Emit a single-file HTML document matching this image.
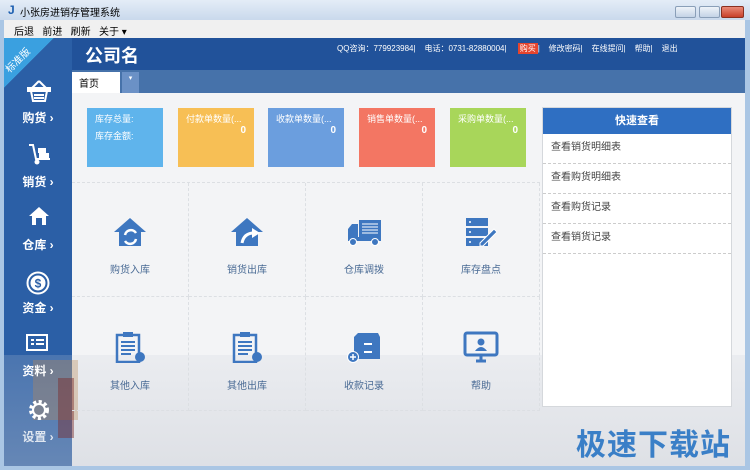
<!DOCTYPE html>
<html><head><meta charset="utf-8"><style>
*{margin:0;padding:0;box-sizing:border-box}
body{width:750px;height:470px;overflow:hidden;font-family:"Liberation Sans","Noto Sans CJK SC",sans-serif;background:#aac6e4;position:relative}
.abs{position:absolute}
.title{left:0;top:0;width:750px;height:20px;background:linear-gradient(#e4edf7,#c9d9ec);font-size:10px;color:#000}
.tool{left:4px;top:20px;width:741px;height:18px;background:#f0f0f0;font-size:10px;color:#000}
.hdr{left:4px;top:38px;width:741px;height:32px;background:#21529a}
.side{left:4px;top:38px;width:68px;height:428px;background:#2b5fa6}
.tabbar{left:72px;top:70px;width:673px;height:23px;background:#4672aa}
.content{left:72px;top:93px;width:673px;height:373px;background:#f3f4f6}
.card{top:108px;width:76px;height:59px;color:#fff;font-size:9px;padding:4px 8px}
.card .n{text-align:right;font-weight:bold;font-size:10px}
.cell{width:117px;height:114px;text-align:center;font-size:10px;color:#4a6b95;border-right:1px dashed #dcdfe3;border-bottom:1px dashed #dcdfe3}
.cell svg{display:block;margin:34px auto 14px}
.sl{left:6px;width:64px;color:#fff;font-size:12px;text-align:center;font-weight:bold}
.qi{height:30px;line-height:28px;padding-left:8px;font-size:10px;color:#444;border-bottom:1px dashed #ccc}
.btn{top:6px;width:21px;height:12px;border:1px solid #8a9fb8;border-radius:2px;background:linear-gradient(#eef3f9,#c4d3e6)}
</style></head><body>
<div class="abs title"><span class="abs" style="left:8px;top:3px;color:#1d5fb0;font-weight:bold;font-size:12px">J</span><span class="abs" style="left:20px;top:4px">小张房进销存管理系统</span></div>
<div class="abs btn" style="left:675px"></div><div class="abs btn" style="left:699px"></div>
<div class="abs btn" style="left:721px;width:23px;background:linear-gradient(#e98a78,#c8402a);border-color:#8a3020"></div>
<div class="abs tool"><span class="abs" style="left:10px;top:3px">后退&nbsp;&nbsp; 前进&nbsp;&nbsp; 刷新&nbsp;&nbsp; 关于 ▾</span></div>
<div class="abs hdr"></div>
<div class="abs side"></div>
<div class="abs" style="left:4px;top:38px;width:50px;height:50px;background:linear-gradient(135deg,#3aa0e0 50%,transparent 50%)"></div>
<div class="abs" style="left:2px;top:52px;color:#fff;font-size:10px;transform:rotate(-45deg)">标准版</div>
<div class="abs" style="left:85px;top:42px;color:#fff;font-size:18px;font-weight:bold">公司名</div>
<div class="abs" style="left:337px;top:43px;color:#fff;font-size:8px;white-space:nowrap">QQ咨询：779923984|&nbsp;&nbsp;&nbsp; 电话：0731-82880004|&nbsp;&nbsp;&nbsp;&nbsp; <span style="background:#e5452e;padding:1px 2px">购买</span>|&nbsp;&nbsp;&nbsp; 修改密码|&nbsp;&nbsp;&nbsp; 在线提问|&nbsp;&nbsp;&nbsp; 帮助|&nbsp;&nbsp;&nbsp; 退出</div>
<div class="abs tabbar"></div>
<div class="abs" style="left:72px;top:72px;width:48px;height:21px;background:#fff;font-size:10px;padding:3px 7px">首页</div>
<div class="abs" style="left:122px;top:72px;width:17px;height:21px;background:#6b91c6;color:#fff;font-size:7px;text-align:center;line-height:14px">▾</div>
<div class="abs content"></div>
<!-- sidebar -->
<svg class="abs" style="left:27px;top:80px" width="24" height="22" viewBox="0 0 24 22" fill="none" stroke="#fff" stroke-width="2"><path d="M12 1 L5 8 M12 1 L19 8"/><rect x="1" y="8" width="22" height="3" fill="#fff"/><path d="M4 11 L6 21 H18 L20 11 Z"/><path d="M7 15h10M7 18h10"/></svg>
<div class="abs sl" style="top:109px">购货 ›</div>
<svg class="abs" style="left:28px;top:143px" width="24" height="22" viewBox="0 0 24 22"><path d="M1 2h4l3 14h14" stroke="#fff" stroke-width="2" fill="none"/><rect x="10" y="5" width="8" height="5" fill="#fff"/><rect x="11" y="10" width="10" height="5" fill="#fff"/><circle cx="9" cy="19" r="2.5" fill="#fff"/></svg>
<div class="abs sl" style="top:173px">销货 ›</div>
<svg class="abs" style="left:28px;top:206px" width="22" height="20" viewBox="0 0 22 20"><path d="M11 1 L1 10 H4 V19 H18 V10 H21 Z" fill="#fff"/><rect x="8" y="12" width="6" height="7" fill="#2b5fa6"/></svg>
<div class="abs sl" style="top:236px">仓库 ›</div>
<svg class="abs" style="left:26px;top:271px" width="24" height="24" viewBox="0 0 24 24"><circle cx="12" cy="12" r="10.5" stroke="#fff" stroke-width="2" fill="none"/><circle cx="12" cy="12" r="7.5" fill="#fff"/><text x="12" y="16.5" font-size="12" font-weight="bold" text-anchor="middle" fill="#2b5fa6" font-family="Liberation Sans">$</text></svg>
<div class="abs sl" style="top:299px">资金 ›</div>
<!-- bg illustration faint -->
<div class="abs" style="left:4px;top:355px;width:741px;height:111px;background:linear-gradient(rgba(200,205,215,0.2),rgba(190,195,205,0.4))"></div>
<div class="abs" style="left:33px;top:360px;width:45px;height:60px;background:#b98a55;opacity:.35"></div>
<div class="abs" style="left:58px;top:378px;width:16px;height:60px;background:#7a2a2a;opacity:.45"></div>
<svg class="abs" style="left:26px;top:334px" width="24" height="20" viewBox="0 0 24 20"><rect x="1" y="1" width="20" height="15" stroke="#fff" stroke-width="2" fill="none"/><path d="M5 6h3M5 10h3M10 6h8M10 10h8" stroke="#fff" stroke-width="2"/></svg>
<div class="abs sl" style="top:362px">资料 ›</div>
<svg class="abs" style="left:27px;top:398px" width="24" height="24" viewBox="0 0 24 24"><circle cx="12" cy="12" r="8" stroke="#fff" stroke-width="4" stroke-dasharray="3 2.3" fill="none"/><circle cx="12" cy="12" r="6" stroke="#fff" stroke-width="2" fill="none"/></svg>
<div class="abs sl" style="top:428px;opacity:.8">设置 ›</div>
<!-- cards -->
<div class="abs card" style="left:87px;background:#5fb4ec">库存总量:<br><div style="margin-top:4px">库存金额:</div></div>
<div class="abs card" style="left:178px;background:#f7bf55">付款单数量(...<div class="n">0</div></div>
<div class="abs card" style="left:268px;background:#6b9ede">收款单数量(...<div class="n">0</div></div>
<div class="abs card" style="left:359px;background:#f37663">销售单数量(...<div class="n">0</div></div>
<div class="abs card" style="left:450px;background:#a8d65a">采购单数量(...<div class="n">0</div></div>
<div class="abs" style="left:72px;top:182px;width:468px;border-top:1px dashed #dcdfe3"></div>
<!-- grid -->
<div class="abs" style="left:72px;top:183px;width:470px;display:flex;flex-wrap:wrap">
<div class="cell"><svg width="34" height="30" viewBox="0 0 34 30"><path d="M17 1 L1 15 H6 V29 H28 V15 H33 Z" fill="#3e77c0"/><path d="M12 18a6 6 0 0 1 11-2M23 22a6 6 0 0 1-11 2" stroke="#fff" stroke-width="2.5" fill="none"/></svg>购货入库</div>
<div class="cell"><svg width="34" height="30" viewBox="0 0 34 30"><path d="M17 1 L1 15 H6 V29 H28 V15 H33 Z" fill="#3e77c0"/><path d="M12 26 Q14 16 24 16" stroke="#fff" stroke-width="3" fill="none"/><path d="M22 11 L30 16 L22 21Z" fill="#fff"/></svg>销货出库</div>
<div class="cell"><svg width="36" height="30" viewBox="0 0 36 30"><rect x="13" y="3" width="22" height="17" fill="#3e77c0"/><path d="M16 7h16M16 10h16M16 13h16M16 16h16" stroke="#fff"/><path d="M2 12 L6 7 H12 V23 H2Z" fill="#3e77c0"/><rect x="2" y="20" width="33" height="4" fill="#3e77c0"/><circle cx="7" cy="25" r="3.5" fill="#3e77c0" stroke="#fff"/><circle cx="29" cy="25" r="3.5" fill="#3e77c0" stroke="#fff"/></svg>仓库调拨</div>
<div class="cell"><svg width="34" height="30" viewBox="0 0 34 30"><rect x="2" y="1" width="22" height="8" fill="#3e77c0"/><rect x="2" y="11" width="22" height="8" fill="#3e77c0"/><rect x="2" y="21" width="22" height="8" fill="#3e77c0"/><circle cx="6" cy="5" r="1" fill="#fff"/><circle cx="6" cy="15" r="1" fill="#fff"/><circle cx="6" cy="25" r="1" fill="#fff"/><path d="M16 26 L30 12 L33 15 L19 29 H16Z" fill="#3e77c0" stroke="#fff"/></svg>库存盘点</div>
<div class="cell"><svg width="34" height="32" viewBox="0 0 34 32"><rect x="4" y="4" width="22" height="27" fill="none" stroke="#3e77c0" stroke-width="2.5"/><rect x="10" y="1" width="10" height="5" fill="#3e77c0"/><path d="M8 11h14M8 15h14M8 19h14M8 23h10" stroke="#3e77c0" stroke-width="2"/><circle cx="27" cy="26" r="5" fill="#3e77c0"/></svg>其他入库</div>
<div class="cell"><svg width="34" height="32" viewBox="0 0 34 32"><rect x="4" y="4" width="22" height="27" fill="none" stroke="#3e77c0" stroke-width="2.5"/><rect x="10" y="1" width="10" height="5" fill="#3e77c0"/><path d="M8 11h14M8 15h14M8 19h14M8 23h10" stroke="#3e77c0" stroke-width="2"/><circle cx="27" cy="26" r="5" fill="#3e77c0"/></svg>其他出库</div>
<div class="cell"><svg width="36" height="32" viewBox="0 0 36 32"><path d="M8 6 L12 2 H32 L34 6 V28 H8Z" fill="#3e77c0"/><path d="M18 13h8M18 21h8" stroke="#fff" stroke-width="2"/><circle cx="7" cy="26" r="5.5" fill="#3e77c0" stroke="#fff"/><path d="M4 26h6M7 23v6" stroke="#fff" stroke-width="1.5"/></svg>收款记录</div>
<div class="cell"><svg width="36" height="32" viewBox="0 0 36 32"><rect x="2" y="2" width="32" height="22" rx="2" fill="none" stroke="#3e77c0" stroke-width="3"/><circle cx="18" cy="11" r="3.5" fill="#3e77c0"/><path d="M12 20 Q18 12 24 20Z" fill="#3e77c0"/><path d="M13 30h10M18 24v6" stroke="#3e77c0" stroke-width="3"/></svg>帮助</div>
</div>
<!-- right panel -->
<div class="abs" style="left:542px;top:107px;width:190px;height:300px;background:#fff;border:1px solid #d5d8dc">
<div style="height:26px;background:#2f6fc2;color:#fff;text-align:center;line-height:26px;font-size:11px;font-weight:bold">快速查看</div>
<div class="qi">查看销货明细表</div><div class="qi">查看购货明细表</div><div class="qi">查看购货记录</div><div class="qi">查看销货记录</div>
</div>
<div class="abs" style="left:576px;top:420px;font-size:30px;font-weight:bold;color:#3a7fc7;letter-spacing:1px">极速下载站</div>
</body></html>
